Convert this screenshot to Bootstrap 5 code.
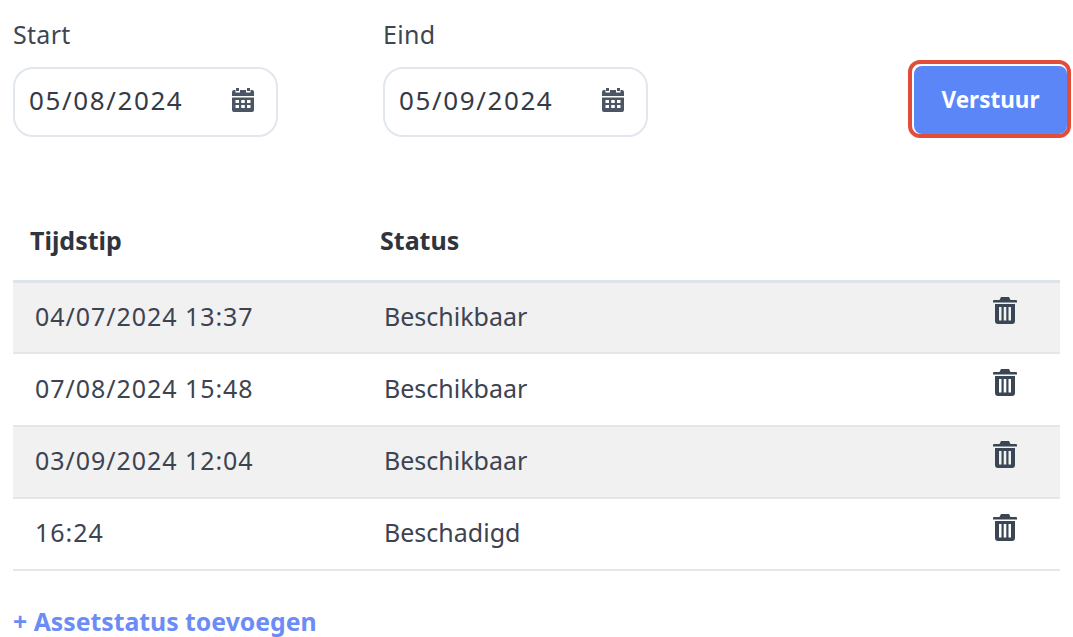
<!DOCTYPE html>
<html lang="en">
<head>
    <meta charset="UTF-8">
    <title>Assetstatus</title>
    <link href="https://cdn.jsdelivr.net/npm/bootstrap@5.3.0/dist/css/bootstrap.min.css" rel="stylesheet">
    <style>
        body { font-family: "Noto Sans", "Open Sans", sans-serif; color: #3a3f4a; overflow: hidden; }
        .page-wrap { padding: 18px 13px 0; }
        .filter-row { align-items: flex-start; }
        .date-group { width: 265px; margin-right: 105px; }
        .date-label { display: block; font-size: 25px; letter-spacing: .3px; line-height: 32px; margin-bottom: 17px; color: #3d4653; }
        .date-box { position: relative; }
        .date-box .form-control { height: 70px; border-radius: 20px; border: 2px solid #e2e7ee; font-size: 26px; letter-spacing: 1.6px; padding: 0 14px 4px; color: #343a46; box-shadow: none; }
        .date-icon { position: absolute; right: 23px; top: 20px; width: 24px; height: 26px; fill: #4c5563; }
        .send-wrap { margin-left: auto; margin-top: 42px; margin-right: -11px; padding: 2px 0 0 2px; border: 4px solid #e24d3a; border-radius: 12px; background: #fff; }
        .send-btn { display: block; width: 153px; height: 68px; background: #5b86f7; border: 0; border-radius: 8px; color: #fff; font-size: 22.5px; font-weight: 700; padding: 0; }
        .status-table { margin-top: 67px; width: 1047px; margin-bottom: 0; table-layout: fixed; --bs-table-striped-bg: #f1f1f1; --bs-table-striped-color: #3d4350; --bs-table-bg: transparent; }
        .status-table th { font-size: 25px; font-weight: 700; color: #2f343d; height: 76px; padding: 0 0 4px 17px; vertical-align: middle; border-bottom: 3px solid #dfe4ec; }
        .status-table th.col-state { padding-left: 18px; }
        .status-table td { font-size: 25px; height: 72.3px; padding: 0 0 2px 22px; vertical-align: middle; border-bottom: 2px solid #e4e6ea; }
        .status-table tr td { color: #3d4350; }
        .status-table .col-time { width: 349px; }
        .status-table .col-del { width: 100px; }
        .status-table .time-cell { letter-spacing: .95px; }
        .trash-icon { width: 24px; height: 27px; fill: #3b4655; display: block; margin: -12px 0 0 11px; }
        .add-link { display: inline-block; margin-top: 37px; font-size: 24.8px; line-height: 26px; font-weight: 700; color: #6c8cf5; text-decoration: none; }
    </style>
</head>
<body>
    <div class="page-wrap">
        <div class="d-flex filter-row">
            <div class="date-group">
                <label class="date-label" for="startDate">Start</label>
                <div class="date-box">
                    <input class="form-control" id="startDate" type="text" value="05/08/2024">
                    <svg class="date-icon" viewBox="0 0 24 26"><path d="M5 1h3v3H5zM16 1h3v3h-3zM3 3h1.500v2.500h4.500V3h6v2.500h4.500V3H21a2 2 0 0 1 2 2v4H1V5a2 2 0 0 1 2-2zM1 10.500h22V23a2 2 0 0 1-2 2H3a2 2 0 0 1-2-2zm3.500 2.500v3h3.500v-3zm5.700 0v3h3.600v-3zm5.800 0v3h3.500v-3zM4.500 18v3h3.500v-3zm5.700 0v3h3.600v-3zm5.800 0v3h3.500v-3z" fill-rule="evenodd"/></svg>
                </div>
            </div>
            <div class="date-group">
                <label class="date-label" for="endDate">Eind</label>
                <div class="date-box">
                    <input class="form-control" id="endDate" type="text" value="05/09/2024">
                    <svg class="date-icon" viewBox="0 0 24 26"><path d="M5 1h3v3H5zM16 1h3v3h-3zM3 3h1.500v2.500h4.500V3h6v2.500h4.500V3H21a2 2 0 0 1 2 2v4H1V5a2 2 0 0 1 2-2zM1 10.500h22V23a2 2 0 0 1-2 2H3a2 2 0 0 1-2-2zm3.500 2.500v3h3.500v-3zm5.700 0v3h3.600v-3zm5.800 0v3h3.500v-3zM4.500 18v3h3.500v-3zm5.700 0v3h3.600v-3zm5.800 0v3h3.500v-3z" fill-rule="evenodd"/></svg>
                </div>
            </div>
            <div class="send-wrap">
                <button class="btn send-btn" type="button">Verstuur</button>
            </div>
        </div>

        <table class="table table-striped status-table">
            <thead>
                <tr>
                    <th class="col-time">Tijdstip</th>
                    <th class="col-state">Status</th>
                    <th class="col-del"></th>
                </tr>
            </thead>
            <tbody id="statusRows"></tbody>
        </table>

        <a class="add-link" href="#">+ Assetstatus toevoegen</a>
    </div>

    <script src="https://cdn.jsdelivr.net/npm/bootstrap@5.3.0/dist/js/bootstrap.bundle.min.js"></script>
    <script>
        const rows = [
            ['04/07/2024 13:37', 'Beschikbaar'],
            ['07/08/2024 15:48', 'Beschikbaar'],
            ['03/09/2024 12:04', 'Beschikbaar'],
            ['16:24', 'Beschadigd']
        ];
        const trash = '<svg class="trash-icon" viewBox="0 0 24 27"><path fill-rule="evenodd" d="M8 0h8l1.500 3H23a1 1 0 0 1 1 1v1.500H0V4a1 1 0 0 1 1-1h5.500zM2 7h20v17a3 3 0 0 1-3 3H5a3 3 0 0 1-3-3zm4 3v13.500h2.500V10zm4.700 0v13.500h2.600V10zm4.800 0v13.500H18V10z"/></svg>';
        document.getElementById('statusRows').innerHTML = rows.map(r =>
            `<tr><td class="time-cell">${r[0]}</td><td>${r[1]}</td><td>${trash}</td></tr>`
        ).join('');
    </script>
</body>
</html>
